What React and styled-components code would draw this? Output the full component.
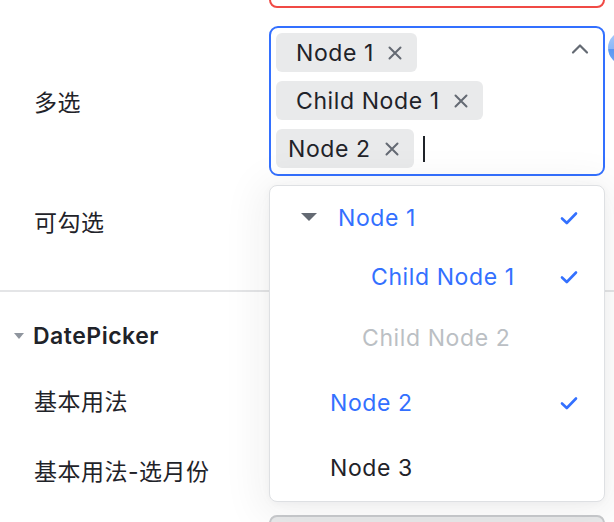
import React from "react";
import styled, { createGlobalStyle } from "styled-components";

const Global = createGlobalStyle`
  html, body { margin: 0; padding: 0; background: #fff; overflow: hidden; }
  body { font-family: Inter, "Noto Sans CJK SC", sans-serif; color: #1f2329; }
`;

const Page = styled.div`
  width: 614px;
  height: 522px;
  position: relative;
  overflow: hidden;
  display: flex;
  flex-direction: column;
`;

const Row = styled.div`
  display: flex;
  align-items: center;
  height: ${(p) => p.$h}px;
  margin-top: ${(p) => p.$mt || 0}px;
  flex-shrink: 0;
`;

const Label = styled.div`
  width: 269px;
  box-sizing: border-box;
  padding-left: 34px;
  font-size: 23px;
  letter-spacing: 0.5px;
  font-family: Inter, "Noto Sans CJK SC", sans-serif;
  color: #1f2329;
  flex-shrink: 0;
`;

const Control = styled.div`
  width: 336px;
  position: relative;
  display: flex;
  flex-direction: column;
  justify-content: flex-end;
  height: ${(p) => (p.$h ? `${p.$h}px` : "auto")};
  overflow: ${(p) => (p.$clip ? "hidden" : "visible")};
`;

const Input = styled.div`
  box-sizing: border-box;
  height: 42px;
  width: 100%;
  border-radius: 8px;
  border: 2px solid ${(p) => p.$border || "#d0d3d6"};
  background: ${(p) => p.$bg || "#fff"};
  flex-shrink: 0;
`;

const MultiBox = styled.div`
  box-sizing: border-box;
  width: 100%;
  height: 150px;
  border: 2px solid #3370ff;
  border-radius: 9px;
  padding: 5px 6px 6px 5px;
  display: flex;
  flex-direction: column;
  align-items: flex-start;
  gap: 9px;
  position: relative;
  background: #fff;
`;

const TagLine = styled.div`
  display: flex;
  align-items: center;
`;

const Tag = styled.div`
  display: flex;
  align-items: center;
  height: 39px;
  box-sizing: border-box;
  padding: 0 14px 0 ${(p) => (p.$indent ? 20 : 12)}px;
  background: #e9eaeb;
  border-radius: 6px;
  font-size: 23px;
  letter-spacing: 0.6px;
  color: #1f2329;
  gap: 13px;
`;

const Cursor = styled.div`
  width: 2px;
  height: 26px;
  background: #1f2329;
  margin-left: 9px;
`;

const Arrow = styled.div`
  position: absolute;
  right: 14px;
  top: 15px;
  display: flex;
`;

const Dropdown = styled.div`
  position: absolute;
  z-index: 10;
  left: 0;
  top: calc(100% + 9px);
  width: 336px;
  box-sizing: border-box;
  background: #fff;
  border: 1px solid #dee0e3;
  border-radius: 8px;
  padding: 2px 0 1px;
  box-shadow: 0 6px 40px 10px rgba(31, 35, 41, 0.06), 0 2px 8px rgba(31, 35, 41, 0.04);
`;

const Option = styled.div`
  height: ${(p) => p.$h}px;
  display: flex;
  align-items: center;
  padding-left: ${(p) => p.$pl}px;
  padding-right: 26px;
  font-size: 23px;
  letter-spacing: 0.6px;
  color: ${(p) => (p.$state === "on" ? "#3370ff" : p.$state === "off" ? "#bbbfc4" : "#1f2329")};
  position: relative;
`;

const OptText = styled.span`
  flex: 1;
`;

const Caret = styled.span`
  position: absolute;
  left: 31px;
  top: 50%;
  margin-top: -5px;
  width: 0;
  height: 0;
  border-left: 8px solid transparent;
  border-right: 8px solid transparent;
  border-top: 8px solid #646a73;
`;

const Divider = styled.div`
  height: 2px;
  background: #e4e5e7;
  margin-top: ${(p) => p.$mt}px;
  flex-shrink: 0;
`;

const SectionHead = styled.div`
  display: flex;
  align-items: center;
  gap: 9px;
  height: 40px;
  margin-top: 24px;
  padding-left: 14px;
  font-size: 23px;
  letter-spacing: 0.5px;
  font-weight: 600;
  color: #1f2329;
  flex-shrink: 0;
`;

const SmallTri = styled.span`
  width: 0;
  height: 0;
  border-left: 5px solid transparent;
  border-right: 5px solid transparent;
  border-top: 6px solid #8f959e;
`;

const HelpBubble = styled.div`
  position: absolute;
  left: 608px;
  top: 31px;
  width: 34px;
  height: 34px;
  border-radius: 50%;
  background: linear-gradient(180deg, #a9cbfb 0%, #8cb8f8 52%, #5b97f2 53%, #74a9f6 100%);
`;

const X = () => (
  <svg width="16" height="16" viewBox="0 0 16 16">
    <path d="M2.5 2.5 L13.5 13.5 M13.5 2.5 L2.5 13.5" stroke="#646a73" strokeWidth="2" strokeLinecap="round" />
  </svg>
);

const Check = () => (
  <svg width="18" height="14" viewBox="0 0 18 14">
    <path d="M2 7.5 L6.8 12 L16 2.5" stroke="#3370ff" strokeWidth="2.6" fill="none" strokeLinecap="round" strokeLinejoin="round" />
  </svg>
);

const ChevronUp = () => (
  <svg width="18" height="12" viewBox="0 0 18 12">
    <path d="M2 9.5 L9 2.5 L16 9.5" stroke="#646a73" strokeWidth="2.2" fill="none" strokeLinecap="round" strokeLinejoin="round" />
  </svg>
);

const options = [
  { text: "Node 1", pl: 68, h: 60, state: "on", caret: true, check: true },
  { text: "Child Node 1", pl: 101, h: 58, state: "on", check: true },
  { text: "Child Node 2", pl: 92, h: 64, state: "off" },
  { text: "Node 2", pl: 60, h: 65, state: "on", check: true },
  { text: "Node 3", pl: 60, h: 65, state: "" },
];

export default function App() {
  return (
    <>
      <Global />
      <Page>
        <Row $h={8}>
          <Label />
          <Control $h={8} $clip>
            <Input $border="#f04a45" />
          </Control>
        </Row>
        <Row $h={150} $mt={18}>
          <Label>多选</Label>
          <Control>
            <MultiBox>
              <Tag $indent>Node 1<X /></Tag>
              <Tag $indent>Child Node 1<X /></Tag>
              <TagLine>
                <Tag>Node 2<X /></Tag>
                <Cursor />
              </TagLine>
              <Arrow><ChevronUp /></Arrow>
            </MultiBox>
            <Dropdown>
              {options.map((o) => (
                <Option key={o.text} $pl={o.pl} $h={o.h} $state={o.state}>
                  {o.caret && <Caret />}
                  <OptText>{o.text}</OptText>
                  {o.check && <Check />}
                </Option>
              ))}
            </Dropdown>
          </Control>
        </Row>
        <Row $h={90}>
          <Label>可勾选</Label>
          <Control><Input /></Control>
        </Row>
        <Divider $mt={24} />
        <SectionHead><SmallTri />DatePicker</SectionHead>
        <Row $h={42} $mt={23}>
          <Label>基本用法</Label>
          <Control><Input /></Control>
        </Row>
        <Row $h={42} $mt={28}>
          <Label>基本用法-选月份</Label>
          <Control><Input /></Control>
        </Row>
        <Row $h={42} $mt={24}>
          <Label />
          <Control><Input $bg="#e9eaeb" $border="#c8cacd" /></Control>
        </Row>
        <HelpBubble />
      </Page>
    </>
  );
}
